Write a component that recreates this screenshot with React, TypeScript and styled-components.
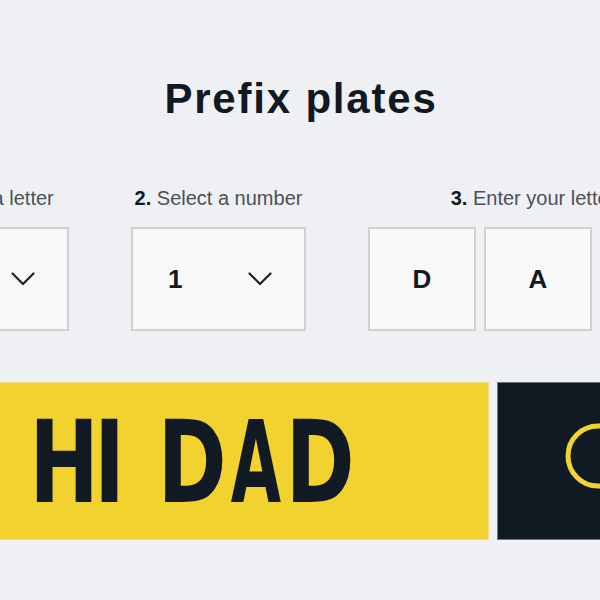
import styled, { createGlobalStyle } from "styled-components";

const GlobalStyle = createGlobalStyle`
  html, body {
    margin: 0;
    padding: 0;
    background: #eff0f4;
    overflow: hidden;
  }
  body {
    font-family: "Liberation Sans", Arial, sans-serif;
    color: #111a22;
  }
`;

const Page = styled.main`
  width: 600px;
  height: 600px;
  display: flex;
  flex-direction: column;
  align-items: center;
  padding-top: 75px;
  box-sizing: border-box;
`;

const Title = styled.h1`
  margin: 0 0 63px 2px;
  font-size: 42px;
  line-height: 48px;
  font-weight: 700;
  letter-spacing: 1.8px;
  color: #111a22;
`;

const Builder = styled.div`
  width: 815px;
  margin-left: 3px;
  flex-shrink: 0;
  display: flex;
  flex-direction: column;
  gap: 51px;
`;

const Steps = styled.div`
  display: flex;
  gap: 62px;
`;

const Step = styled.div`
  display: flex;
  flex-direction: column;
  align-items: center;
  gap: 17px;
`;

const Label = styled.div`
  font-size: 20px;
  line-height: 24px;
  color: #4b5158;
  white-space: nowrap;

  b {
    color: #111a22;
    font-weight: 700;
  }
`;

const Field = styled.div<{ $width: number }>`
  width: ${(p) => p.$width}px;
  height: 104px;
  box-sizing: border-box;
  border: 2px solid #d0d1d3;
  background: #f8f8f8;
  display: flex;
  align-items: center;
  font-size: 26px;
  font-weight: 700;
  color: #111a22;
`;

const Select = styled(Field)`
  justify-content: space-between;
  padding: 0 32px 0 35px;
`;

const Letter = styled(Field)`
  justify-content: center;
`;

const Letters = styled.div`
  display: flex;
  gap: 8px;
`;

const Chevron = () => (
  <svg width="24" height="14" viewBox="0 0 24 14" fill="none">
    <polyline
      points="1.5,1.5 12,12 22.5,1.5"
      stroke="#1a2229"
      strokeWidth="2.2"
      strokeLinecap="round"
      strokeLinejoin="round"
    />
  </svg>
);

const Plates = styled.div`
  display: flex;
  gap: 8px;
  height: 158px;
`;

const YellowPlate = styled.div`
  width: 595px;
  box-sizing: border-box;
  background: #f2d22e;
  border: 1px solid #efdc86;
  display: flex;
  align-items: center;
  justify-content: center;
  overflow: hidden;
`;

const Registration = styled.div`
  display: flex;
  margin: 4px 0 0 0;
`;

const Glyph = styled.span<{ $cell: number; $squeeze: number }>`
  display: inline-flex;
  justify-content: center;
  width: ${(p) => p.$cell}px;
  font-family: "DejaVu Sans", "Liberation Sans", sans-serif;
  font-weight: 700;
  font-size: 114px;
  line-height: 1;
  color: #111a22;
  transform: scaleX(${(p) => p.$squeeze});
  white-space: pre;
`;

const cellWidth = (ch: string) => (ch === "I" ? 27 : ch === " " ? 37 : 64);
const squeeze = (ch: string) => (ch === "A" ? 0.57 : 0.73);

const DarkPlate = styled.div`
  width: 212px;
  box-sizing: border-box;
  background: #101a22;
  border: 1px solid #6f7780;
  display: flex;
  align-items: center;
  justify-content: center;
  padding: 0 10px 11px 0;
`;

const Ring = () => (
  <svg width="66" height="66" viewBox="0 0 66 66" fill="none">
    <circle cx="33" cy="33" r="30" stroke="#f2d22e" strokeWidth="5" />
  </svg>
);

const registration = "HI DAD";

const App = () => {
  return (
    <>
      <GlobalStyle />
      <Page>
        <Title>Prefix plates</Title>
        <Builder>
          <Steps>
            <Step>
              <Label>
                <b>1.</b> Select a letter
              </Label>
              <Select $width={175}>
                <span>H</span>
                <Chevron />
              </Select>
            </Step>
            <Step>
              <Label>
                <b>2.</b> Select a number
              </Label>
              <Select $width={175}>
                <span>1</span>
                <Chevron />
              </Select>
            </Step>
            <Step>
              <Label>
                <b>3.</b> Enter your letters
              </Label>
              <Letters>
                <Letter $width={108}>D</Letter>
                <Letter $width={108}>A</Letter>
                <Letter $width={108}>D</Letter>
              </Letters>
            </Step>
          </Steps>
          <Plates>
            <YellowPlate>
              <Registration>
                {registration.split("").map((ch, i) => (
                  <Glyph key={i} $cell={cellWidth(ch)} $squeeze={squeeze(ch)}>
                    {ch}
                  </Glyph>
                ))}
              </Registration>
            </YellowPlate>
            <DarkPlate>
              <Ring />
            </DarkPlate>
          </Plates>
        </Builder>
      </Page>
    </>
  );
};

export default App;
